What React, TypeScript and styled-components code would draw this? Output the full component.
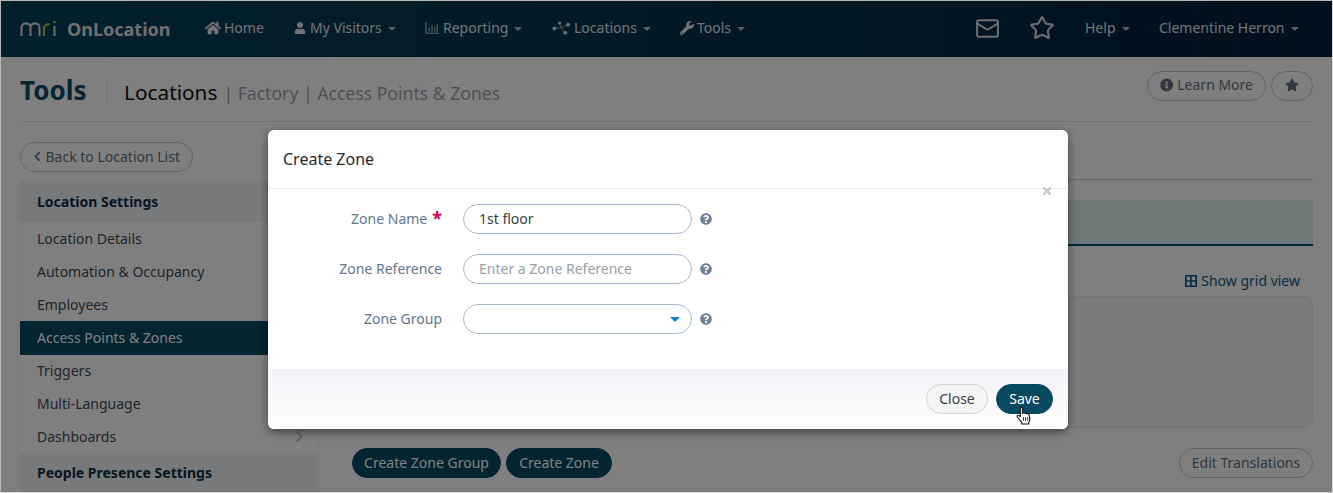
import React from "react";
import styled, { createGlobalStyle } from "styled-components";
import { FaHome, FaUser, FaWrench, FaInfoCircle, FaStar, FaChevronLeft, FaChevronRight, FaQuestionCircle, FaTimes } from "react-icons/fa";
import { Mail, Star } from "lucide-react";

const Global = createGlobalStyle`
  html, body { margin: 0; padding: 0; background: #fff; }
  body { width: 1333px; height: 493px; overflow: hidden; font-family: "Noto Sans", "Open Sans", sans-serif; font-size: 14px; }
  * { box-sizing: border-box; }
`;

const Page = styled.div`
  position: relative;
  width: 1333px;
  height: 493px;
  overflow: hidden;
  background: #fff;
`;
const Header = styled.header`
  height: 57px;
  display: flex;
  align-items: center;
  padding: 0 35px 0 20px;
  background: linear-gradient(90deg, #054059 0%, #04334b 50%, #001f3a 100%);
  color: #fff;
`;
const Logo = styled.div`
  display: flex;
  align-items: center;
  width: 185px;
  gap: 9px;
  font-weight: 700;
  font-size: 18px;
  color: #dedede;
`;
const NavItem = styled.div<{ $w: number }>`
  display: flex;
  align-items: center;
  width: ${(p) => p.$w}px;
  flex: none;
  gap: 3px;
  font-size: 14px;
  color: #e4e4e4;
  padding-bottom: 2px;
  white-space: nowrap;
  svg { flex: none; }
`;
const Caret = styled.span`
  width: 0;
  height: 0;
  margin-left: 3px;
  margin-top: 2px;
  border-left: 4px solid transparent;
  border-right: 4px solid transparent;
  border-top: 4px solid #b5bcc2;
`;
const Spacer = styled.div`
  flex: 1;
`;
const TopIcon = styled.div<{ $w: number }>`
  width: ${(p) => p.$w}px;
  flex: none;
  display: flex;
  color: #dcdcdc;
  padding-bottom: 1px;
`;
const TitleRow = styled.div`
  margin: 0 20px;
  height: 65px;
  padding-top: 6px;
  display: flex;
  align-items: center;
  border-bottom: 1px solid #e6e6e6;
`;
const Tools = styled.h1`
  margin: 0;
  width: 88px;
  height: 26px;
  display: flex;
  align-items: center;
  border-right: 1px solid #e2e2e2;
  font-size: 26px;
  font-weight: 700;
  color: #0a4a66;
  padding-bottom: 5px;
`;
const Crumb = styled.span`
  margin-left: 16px;
  font-size: 20.8px;
  color: #111;
  line-height: 28px;
`;
const CrumbSub = styled.span`
  margin-left: 6px;
  font-size: 17.6px;
  line-height: 28px;
  padding-top: 1px;
  color: #a0a6ad;
`;
const Pill = styled.button<{ $w?: number }>`
  height: 30px;
  ${(p) => (p.$w ? `width: ${p.$w}px;` : "")}
  flex: none;
  display: inline-flex;
  align-items: center;
  justify-content: center;
  gap: 4px;
  padding: 0 12px 2px;
  border: 1px solid #c5cdd2;
  border-radius: 15px;
  background: #fff;
  color: #65707d;
  font: 400 14px "Noto Sans", "Open Sans", sans-serif;
  white-space: nowrap;
`;
const DarkPill = styled(Pill)`
  background: #054a60;
  border-color: #054a60;
  color: #fff;
`;
const PillGroup = styled.div`
  display: flex;
  gap: 5px;
  margin-top: -13px;
`;
const Content = styled.div`
  display: grid;
  grid-template-columns: 298px 1fr;
  column-gap: 34px;
  padding: 20px 20px 0;
`;
const Side = styled.aside`
  display: flex;
  flex-direction: column;
  align-items: flex-start;
`;
const SideCard = styled.nav`
  width: 298px;
  margin-top: 10px;
  background: #fff;
  box-shadow: 0 0 3px rgba(0, 0, 0, 0.1);
`;
const SideHead = styled.div<{ $h: number; $lift?: boolean }>`
  height: ${(p) => p.$h}px;
  display: flex;
  align-items: center;
  padding-left: 17px;
  padding-bottom: ${(p) => (p.$lift ? "2px" : "0")};
  background: #f1f2f5;
  color: #0b2f45;
  font-weight: 700;
  font-size: 14px;
`;
const SideItem = styled.div<{ $active?: boolean }>`
  position: relative;
  height: ${(p) => (p.$active ? "34px" : "33px")};
  margin-bottom: ${(p) => (p.$active ? "-1px" : "0")};
  padding-bottom: ${(p) => (p.$active ? "1px" : "0")};
  display: flex;
  align-items: center;
  padding-left: 17px;
  font-size: 14px;
  color: ${(p) => (p.$active ? "#fff" : "#3e4a58")};
  background: ${(p) => (p.$active ? "#054a60" : "transparent")};
`;
const SideChevron = styled.span`
  position: absolute;
  right: 12px;
  top: 10px;
  display: flex;
  color: #b9bdc2;
`;
const Main = styled.main`
  display: flex;
  flex-direction: column;
  padding-top: 37px;
`;
const TabLine = styled.div`
  height: 1px;
  background: #c6d2d4;
`;
const Band = styled.div`
  height: 46px;
  margin-top: 20px;
  background: #e1f0ee;
  border-bottom: 2px solid #054a6b;
`;
const GridLink = styled.div`
  height: 50px;
  display: flex;
  align-items: flex-end;
  justify-content: flex-end;
  gap: 4px;
  padding: 0 13px 6px 0;
  color: #0a5c86;
  font-size: 14px;
  line-height: 19px;
  svg { margin-bottom: 3px; }
`;
const EmptyPanel = styled.div`
  height: 132px;
  background: #f4f6f5;
  border: 1px solid #e8e9e9;
  border-radius: 10px;
`;
const Actions = styled.div`
  display: flex;
  gap: 5px;
  margin-top: 20px;
`;
const RightPill = styled(Pill)`
  margin-left: auto;
`;
const Overlay = styled.div`
  position: absolute;
  inset: 0;
  background: rgba(0, 0, 0, 0.5);
`;
const Frame = styled.div`
  position: absolute;
  inset: 0;
  border: 1px solid #b7b7b7;
  border-right-color: #d8d8d8;
  border-bottom-color: #d8d8d8;
  pointer-events: none;
`;
const Modal = styled.section`
  position: absolute;
  left: 268px;
  top: 130px;
  width: 800px;
  height: 299px;
  display: flex;
  flex-direction: column;
  background: #fff;
  border-radius: 6px;
  box-shadow: 0 3px 9px rgba(0, 0, 0, 0.5);
`;
const ModalHead = styled.div`
  height: 59px;
  flex: none;
  display: flex;
  align-items: center;
  padding-left: 15px;
  border-bottom: 1px solid #ececec;
  font-size: 16px;
  color: #26292c;
`;
const CloseX = styled.span`
  position: absolute;
  right: 15px;
  top: 55px;
  display: flex;
  color: #c9c9c9;
`;
const ModalBody = styled.div`
  flex: 1;
  display: flex;
  flex-direction: column;
  gap: 20px;
  padding-top: 15px;
`;
const Field = styled.div`
  display: flex;
  align-items: center;
  height: 30px;
`;
const Label = styled.label`
  width: 174px;
  flex: none;
  text-align: right;
  font-size: 14px;
  color: #63778f;
  padding-bottom: 2px;
`;
const Req = styled.span`
  color: #d4005a;
  font-size: 18px;
  font-weight: 700;
  line-height: 14px;
  margin-left: 5px;
  vertical-align: -1px;
`;
const InputBox = styled.div<{ $muted?: boolean }>`
  width: 229px;
  height: 30px;
  flex: none;
  margin-left: 21px;
  display: flex;
  align-items: center;
  justify-content: space-between;
  padding: 0 11px 2px 15px;
  border: 1px solid #a9bbd0;
  border-radius: 15px;
  font-size: 14px;
  color: ${(p) => (p.$muted ? "#9a9fa6" : "#3b3f45")};
  background: #fff;
`;
const SelectCaret = styled.span`
  width: 0;
  height: 0;
  margin-top: 3px;
  border-left: 5px solid transparent;
  border-right: 5px solid transparent;
  border-top: 5px solid #0a84c6;
`;
const Help = styled.span`
  margin-left: 8px;
  display: flex;
  color: #6f8196;
`;
const ModalFoot = styled.div`
  height: 60px;
  flex: none;
  display: flex;
  justify-content: flex-end;
  align-items: flex-start;
  gap: 8px;
  padding: 15px 15px 0 0;
  border-radius: 0 0 6px 6px;
  background: linear-gradient(180deg, #f3f3f8 0%, #ffffff 100%);
`;
const CloseBtn = styled(Pill)`
  background: #f5f5f5;
  border-color: #d6d6d6;
  color: #3c4046;
`;
const Cursor = styled.svg`
  position: absolute;
  left: 1016px;
  top: 406px;
`;

const Bars = () => (
  <svg width="15" height="14" viewBox="0 0 16 14" fill="none" stroke="currentColor" strokeWidth="1">
    <path d="M1 1v11.5h14M4.5 7v4M7.5 4v7M10.5 6v5M13 3v8" />
  </svg>
);
const Nodes = () => (
  <svg width="19" height="14" viewBox="0 0 20 14" fill="currentColor" stroke="currentColor" strokeWidth="0.9">
    <path d="M3 7.5l7-1M8 1.5l2 5M10 6.5l3.5 5.5M10 6.5l6-2.5" fill="none" strokeDasharray="1.5 1" />
    <circle cx="2.5" cy="7.5" r="1.6" />
    <circle cx="8" cy="1.8" r="1.3" />
    <circle cx="14" cy="12" r="1.6" />
    <circle cx="17" cy="3.5" r="1.6" />
  </svg>
);
const GridIcon = () => (
  <svg width="12" height="12" viewBox="0 0 12 12" fill="none" stroke="currentColor" strokeWidth="1.6">
    <path d="M.8.8h10.4v10.4H.8zM6 .8v10.4M.8 6h10.4" />
  </svg>
);
const MriMark = () => (
  <svg width="38" height="17" viewBox="0 0 38 17" fill="none" strokeWidth="2.1">
    <path d="M1.5 16V7.5C1.5 2 10.5 2 10.5 7.5V16M10.5 7.5C10.5 2 19.5 2 19.5 7.5V16" stroke="#d8d8d8" />
    <path d="M24 16V8.5C24 5.5 26.5 4 29.5 4.5" stroke="#a8c23c" />
    <path d="M34.5 6V16" stroke="#d8d8d8" />
    <circle cx="34.5" cy="2" r="1.3" fill="#a8c23c" />
  </svg>
);

const sideItems = ["Location Details", "Automation & Occupancy", "Employees", "Access Points & Zones", "Triggers", "Multi-Language", "Dashboards"];

export default function App() {
  return (
    <Page>
      <Global />
      <Header>
        <Logo><MriMark />OnLocation</Logo>
        <NavItem $w={89}><FaHome size={16} />Home</NavItem>
        <NavItem $w={131}><FaUser size={12} style={{ marginRight: 1 }} />My Visitors<Caret /></NavItem>
        <NavItem $w={127}><Bars />Reporting<Caret /></NavItem>
        <NavItem $w={128}><Nodes />Locations<Caret /></NavItem>
        <NavItem $w={99}><FaWrench size={14} />Tools<Caret /></NavItem>
        <Spacer />
        <TopIcon $w={54}><Mail size={25} strokeWidth={1.9} /></TopIcon>
        <TopIcon $w={56}><Star size={26} strokeWidth={1.9} /></TopIcon>
        <NavItem $w={74}>Help<Caret /></NavItem>
        <NavItem $w={139}>Clementine Herron<Caret /></NavItem>
      </Header>
      <TitleRow>
        <Tools>Tools</Tools>
        <Crumb>Locations</Crumb>
        <CrumbSub>| Factory | Access Points &amp; Zones</CrumbSub>
        <Spacer />
        <PillGroup>
          <Pill $w={119}><FaInfoCircle size={14} />Learn More</Pill>
          <Pill $w={42}><FaStar size={14} /></Pill>
        </PillGroup>
      </TitleRow>
      <Content>
        <Side>
          <Pill $w={173}><FaChevronLeft size={11} />Back to Location List</Pill>
          <SideCard>
            <SideHead $h={40} $lift>Location Settings</SideHead>
            {sideItems.map((s) => (
              <SideItem key={s} $active={s === "Access Points & Zones"}>
                {s}
                {s === "Dashboards" && <SideChevron><FaChevronRight size={13} /></SideChevron>}
              </SideItem>
            ))}
            <SideHead $h={38}>People Presence Settings</SideHead>
          </SideCard>
        </Side>
        <Main>
          <TabLine />
          <Band />
          <GridLink><GridIcon />Show grid view</GridLink>
          <EmptyPanel />
          <Actions>
            <DarkPill $w={149}>Create Zone Group</DarkPill>
            <DarkPill $w={106}>Create Zone</DarkPill>
            <RightPill $w={134}>Edit Translations</RightPill>
          </Actions>
        </Main>
      </Content>
      <Overlay />
      <Frame />
      <Modal>
        <ModalHead>Create Zone</ModalHead>
        <CloseX><FaTimes size={12} /></CloseX>
        <ModalBody>
          <Field>
            <Label>Zone Name<Req>*</Req></Label>
            <InputBox>1st floor</InputBox>
            <Help><FaQuestionCircle size={12} /></Help>
          </Field>
          <Field>
            <Label>Zone Reference</Label>
            <InputBox $muted>Enter a Zone Reference</InputBox>
            <Help><FaQuestionCircle size={12} /></Help>
          </Field>
          <Field>
            <Label>Zone Group</Label>
            <InputBox><span /><SelectCaret /></InputBox>
            <Help><FaQuestionCircle size={12} /></Help>
          </Field>
        </ModalBody>
        <ModalFoot>
          <CloseBtn $w={62}>Close</CloseBtn>
          <DarkPill $w={57}>Save</DarkPill>
        </ModalFoot>
      </Modal>
      <Cursor width="16" height="19" viewBox="0 0 15 18">
        <path d="M4 1.5c.8-.8 2-.4 2 .8V7l.6-.3c.8-.4 1.5-.2 1.9.3.8-.3 1.5-.1 1.9.5.9-.3 1.7.1 2 .9l.6 3.6c.2 1.5-.3 2.7-1 3.6v1.4H5.5v-1.3L1.2 10.400c-.7-.9.3-2.100 1.300-1.500l1.500 1.200z" fill="#fff" stroke="#111" strokeWidth="1" strokeLinejoin="round" />
        <path d="M7 10.500v3.500M9 10.500v3.500M11 10.500v3.500" stroke="#111" strokeWidth="0.8" />
      </Cursor>
    </Page>
  );
}
